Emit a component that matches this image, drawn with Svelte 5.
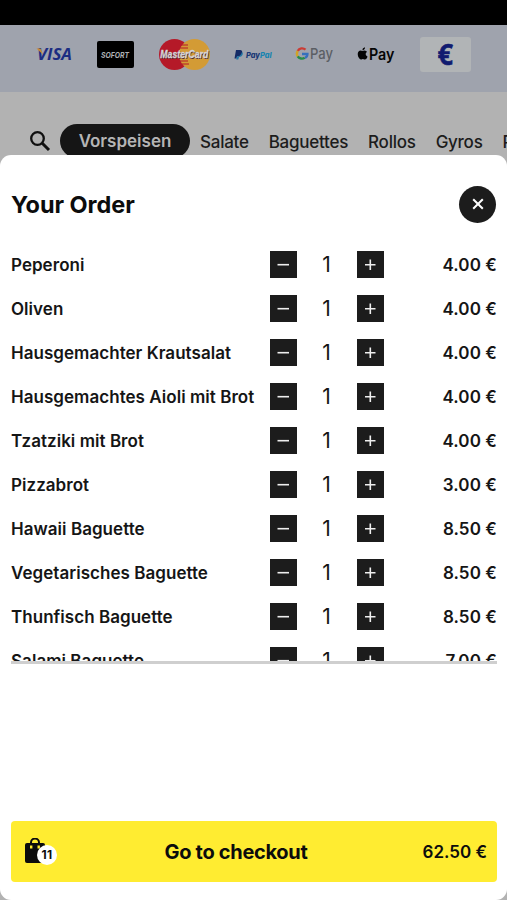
<script>
  let categories = ['Salate', 'Baguettes', 'Rollos', 'Gyros', 'Pizza'];

  let items = [
    { name: 'Peperoni', count: 1, price: 4 },
    { name: 'Oliven', count: 1, price: 4 },
    { name: 'Hausgemachter Krautsalat', count: 1, price: 4 },
    { name: 'Hausgemachtes Aioli mit Brot', count: 1, price: 4 },
    { name: 'Tzatziki mit Brot', count: 1, price: 4 },
    { name: 'Pizzabrot', count: 1, price: 3 },
    { name: 'Hawaii Baguette', count: 1, price: 8.5 },
    { name: 'Vegetarisches Baguette', count: 1, price: 8.5 },
    { name: 'Thunfisch Baguette', count: 1, price: 8.5 },
    { name: 'Salami Baguette', count: 1, price: 7 },
  ];
  let total = 62.5;
  let itemCount = 11;

  function change(item, by) {
    item.count = Math.max(0, item.count + by);
    total = total + by * item.price;
    itemCount = itemCount + by;
    items = items;
  }
</script>

<style>
  :global(body) {
    background: #b2b2b2;
  }

  .app {
    position: relative;
    height: 900px;
    overflow: hidden;
    background: #b2b2b2;
    color: #1c1c1c;
    font-family: Inter, 'Liberation Sans', sans-serif;
  }

  button {
    padding: 0;
    border: 0;
    font: inherit;
    color: inherit;
    cursor: pointer;
  }

  svg {
    display: block;
  }

  .status {
    height: 25px;
    background: #000;
  }

  .payments {
    height: 67px;
    background: #9fa3ad;
  }

  .categories {
    display: flex;
    align-items: center;
    height: 34px;
    margin-top: 32px;
    padding-left: 29px;
    white-space: nowrap;
    font-size: 17px;
    font-weight: 500;
    letter-spacing: -0.25px;
  }

  .search {
    flex: none;
    width: 22px;
    margin-right: 9px;
  }

  .active {
    flex: none;
    width: 130px;
    height: 34px;
    margin-right: 10px;
    border-radius: 17px;
    background: #151515;
    color: #b5b5b5;
    line-height: 35px;
    text-align: center;
    font-weight: 600;
    letter-spacing: 0;
  }

  .category {
    margin-right: 20px;
    padding-top: 1px;
  }

  .sheet {
    position: absolute;
    top: 155px;
    left: 0;
    right: 0;
    bottom: 0;
    display: flex;
    flex-direction: column;
    box-sizing: border-box;
    padding: 30px 10px 18px 11px;
    border-radius: 11px;
    background: #fff;
    color: #151515;
  }

  .head {
    display: flex;
    align-items: center;
    justify-content: space-between;
    height: 38px;
    padding-right: 1px;
  }

  h2 {
    margin: 0;
    font-size: 23.5px;
    font-weight: 700;
    letter-spacing: -0.05px;
    color: #0c0c0c;
  }

  .close {
    display: flex;
    align-items: center;
    justify-content: center;
    width: 37px;
    height: 37px;
    border-radius: 50%;
    background: #1c1c1c;
  }

  .items {
    height: 418px;
    margin: 20px 0 0;
    padding: 0;
    overflow: hidden;
    list-style: none;
    border-bottom: 3px solid #cfcfcf;
  }

  .item {
    display: grid;
    grid-template-columns: 259px 27px 60px 27px 1fr;
    align-items: center;
    height: 44px;
    font-size: 17px;
    font-weight: 600;
    white-space: nowrap;
  }

  .name {
    letter-spacing: 0.04px;
  }

  .step {
    width: 27px;
    height: 27px;
    margin-top: -1px;
    background: #1c1c1c;
  }

  .count {
    margin-top: -2px;
    padding-right: 1px;
    text-align: center;
    font-size: 21px;
    font-weight: 400;
  }

  .price {
    text-align: right;
    letter-spacing: 0.1px;
  }

  .checkout {
    display: grid;
    grid-template-columns: 70px 1fr 110px;
    align-items: center;
    height: 61px;
    margin-top: auto;
    padding: 0 10px 0 14px;
    border-radius: 4px;
    background: #ffec31;
    color: #0c0c0c;
  }

  .bag {
    position: relative;
    width: 34px;
    height: 27px;
  }

  .badge {
    position: absolute;
    top: 7px;
    left: 12px;
    width: 20px;
    height: 20px;
    border-radius: 50%;
    background: #fff;
    line-height: 20px;
    text-align: center;
    font-size: 12px;
    font-weight: 700;
    letter-spacing: 0.3px;
  }

  .label {
    text-align: center;
    font-size: 20px;
    font-weight: 700;
    letter-spacing: -0.3px;
  }

  .total {
    text-align: right;
    font-size: 17px;
    font-weight: 600;
    white-space: nowrap;
  }
</style>

<div class="app">
  <div class="status"></div>
  <div class="payments">
    <svg width="507" height="67" viewBox="0 25 507 67" font-family="Open Sans, sans-serif">
      <text x="37" y="60" textLength="35" lengthAdjust="spacingAndGlyphs" font-size="15.5" font-weight="700" font-style="italic" fill="#1c2d82">VISA</text>
      <path d="M36.500 48.500h4l2.500 6z" fill="#c98a32" />

      <rect x="97" y="41" width="37" height="27" rx="2" fill="#000" />
      <text x="101" y="57.500" textLength="28" lengthAdjust="spacingAndGlyphs" font-family="Inter, sans-serif" font-size="8" font-weight="700" font-style="italic" fill="#aeb1b5">SOFORT</text>

      <circle cx="174.500" cy="54.500" r="15.500" fill="#b51928" />
      <circle cx="194.500" cy="54.500" r="15.500" fill="#d39b35" />
      <path d="M180 45h8M179 48h9M180 61h8M182 64h7" stroke="#b51928" stroke-width="1.200" />
      <g font-family="Liberation Sans, sans-serif" font-size="11.500" font-weight="700" font-style="italic">
        <text x="161" y="59" textLength="48" lengthAdjust="spacingAndGlyphs" fill="#4e2830">MasterCard</text>
        <text x="160.300" y="58.400" textLength="48" lengthAdjust="spacingAndGlyphs" fill="#d3d5da" stroke="#d3d5da" stroke-width="0.300">MasterCard</text>
      </g>

      <path d="M236 50h4q3 0 2 3.500q-1 3-4 3h-1l-.5 2h-2z" fill="#142b66" />
      <path d="M242 52q1.500 1 .5 3q-1 2-3.500 2l-.7 2.500h-2l.5-3q4 0 5.200-4.500z" fill="#2177a6" />
      <text x="246" y="58" textLength="25.500" lengthAdjust="spacingAndGlyphs" font-family="Inter, sans-serif" font-size="7.500" font-weight="800" font-style="italic" fill="#183674">Pay<tspan fill="#1784b0">Pal</tspan></text>

      <g fill="none" stroke-width="2.400">
        <path d="M305.500 49.700a5 5 0 0 0-7.800 1.300" stroke="#cb3c35" />
        <path d="M297.700 51a5 5 0 0 0 0 5.300" stroke="#d1a326" />
        <path d="M297.700 56.300a5 5 0 0 0 7 1.500" stroke="#278c49" />
        <path d="M302 54h5.400q0 2.600-2.400 4" stroke="#3570bd" />
      </g>
      <text x="310" y="59" textLength="23" lengthAdjust="spacingAndGlyphs" font-family="Inter, sans-serif" font-size="15" font-weight="500" fill="#5b5e64">Pay</text>

      <g fill="#050505">
        <path d="M362.500 51q1.400-1 3-.3q1 .3 1.500 1q-3 2.300.6 5q-1.500 3.500-3.200 2.800q-1.700-.8-3 0c-2.500.5-5-5.500-2.800-8q1.500-1.700 3.900-.5z" />
        <path d="M362.300 50.300q0-2.500 2.700-3q.1 2.600-2.700 3z" />
      </g>
      <text x="369" y="59.500" textLength="25.500" lengthAdjust="spacingAndGlyphs" font-family="Inter, sans-serif" font-size="15.500" font-weight="600" fill="#050505">Pay</text>

      <rect x="420" y="37" width="51" height="35" rx="3" fill="#b1b4b6" />
      <text x="437.500" y="64.500" textLength="15.500" lengthAdjust="spacingAndGlyphs" font-size="29" font-weight="700" fill="#101b70" stroke="#101b70" stroke-width="0.600">€</text>
    </svg>
  </div>

  <nav class="categories">
    <svg class="search" width="22" height="22" viewBox="0 0 22 22" fill="none" stroke="#101010">
      <circle cx="8.500" cy="8.500" r="6.300" stroke-width="2.300" />
      <path d="M13 13l7 7" stroke-width="3" />
    </svg>
    <span class="active">Vorspeisen</span>
    {#each categories as category}
      <span class="category">{category}</span>
    {/each}
  </nav>

  <section class="sheet">
    <div class="head">
      <h2>Your Order</h2>
      <button class="close" aria-label="Close">
        <svg width="12" height="12" viewBox="0 0 13 13" stroke="#fff" stroke-width="2.200">
          <path d="M1.300 1.300l10.400 10.400M11.700 1.300L1.300 11.700" />
        </svg>
      </button>
    </div>

    <ul class="items">
      {#each items as item}
        <li class="item">
          <span class="name">{item.name}</span>
          <button class="step" aria-label="Less" on:click={() => change(item, -1)}>
            <svg width="27" height="27" viewBox="0 0 27 27" stroke="#eee" stroke-width="1.600">
              <path d="M7.500 13.700h11.500" />
            </svg>
          </button>
          <span class="count">{item.count}</span>
          <button class="step" aria-label="More" on:click={() => change(item, 1)}>
            <svg width="27" height="27" viewBox="0 0 27 27" stroke="#eee" stroke-width="1.600">
              <path d="M8 13.700h10.500M13.300 8.500v10.500" />
            </svg>
          </button>
          <span class="price">{item.price.toFixed(2)} €</span>
        </li>
      {/each}
    </ul>

    <button class="checkout">
      <span class="bag">
        <svg width="20" height="26" viewBox="0 0 20 26">
          <path d="M6 7V4.500a4 4 0 0 1 8 0V7" fill="none" stroke="#0c0c0c" stroke-width="2" />
          <path d="M2 5h16q2 0 2 2v18H2q-2 0-2-2V7q0-2 2-2z" fill="#0c0c0c" />
          <path d="M5 7.500h2.400v3H5zM12.500 7.500h2.400v3h-2.400z" fill="#ffec31" />
        </svg>
        <span class="badge">{itemCount}</span>
      </span>
      <span class="label">Go to checkout</span>
      <span class="total">{total.toFixed(2)} €</span>
    </button>
  </section>
</div>
